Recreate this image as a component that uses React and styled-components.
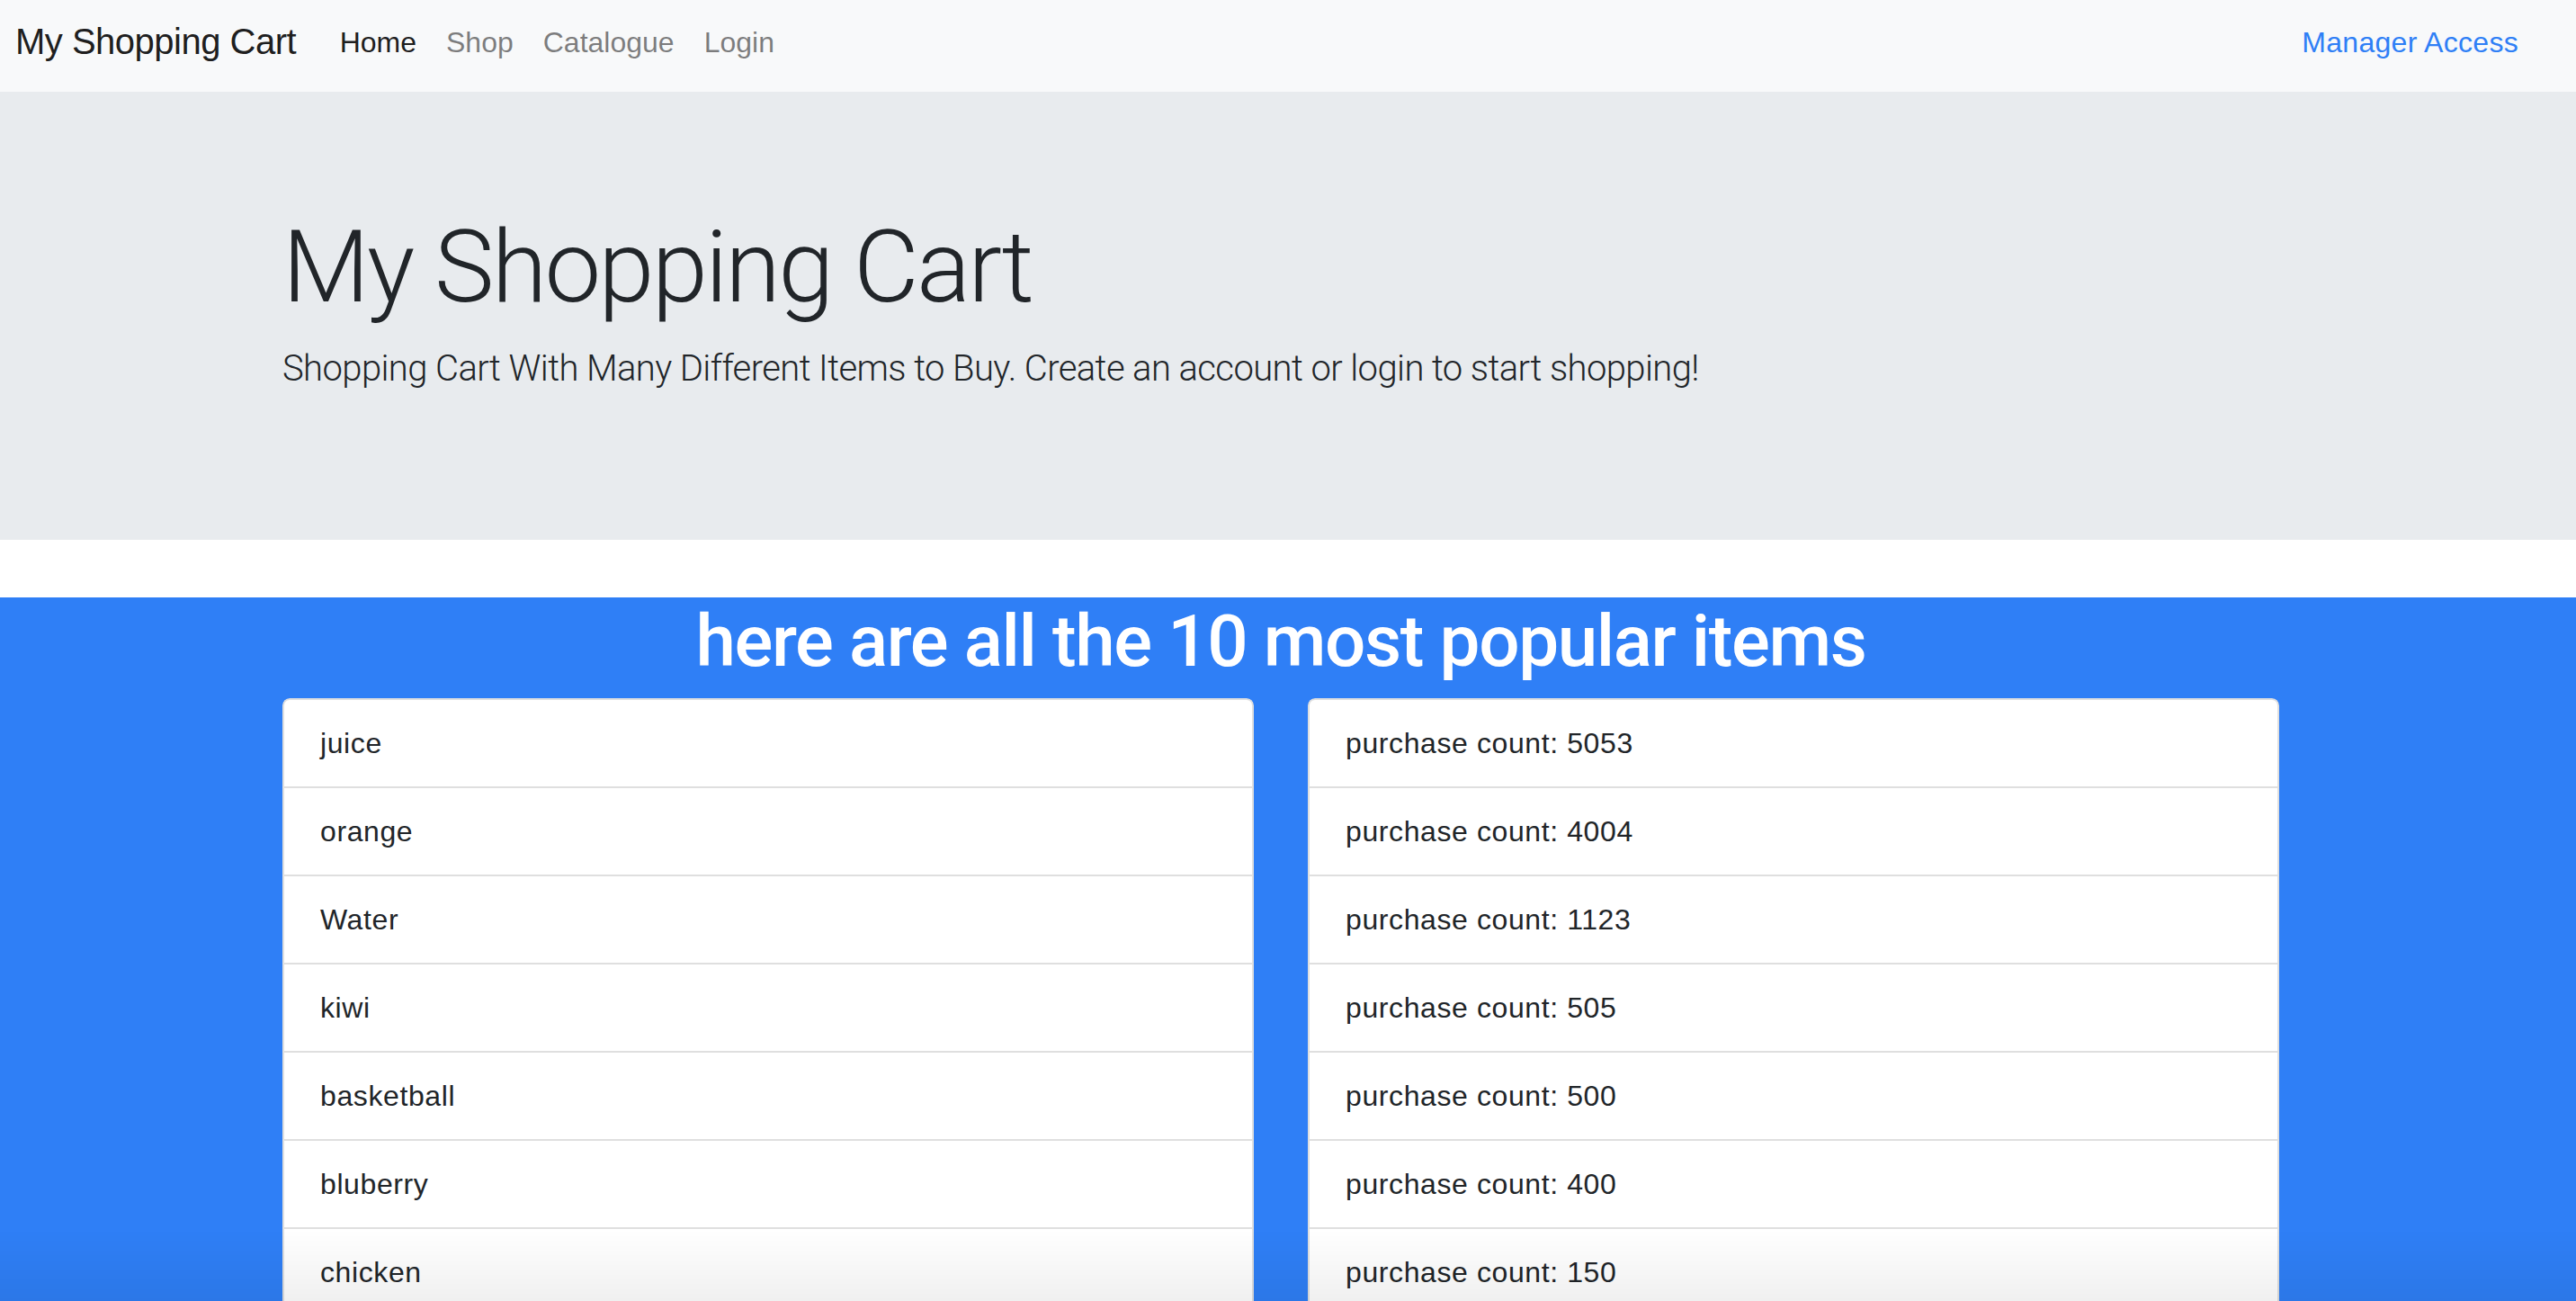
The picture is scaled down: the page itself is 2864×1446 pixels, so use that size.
import React from 'react';
import styled, { createGlobalStyle } from 'styled-components';

const popularItems = [
  { name: 'juice', count: 5053 },
  { name: 'orange', count: 4004 },
  { name: 'Water', count: 1123 },
  { name: 'kiwi', count: 505 },
  { name: 'basketball', count: 500 },
  { name: 'bluberry', count: 400 },
  { name: 'chicken', count: 150 },
  { name: 'apple', count: 120 },
  { name: 'milk', count: 95 },
  { name: 'bread', count: 60 },
];

const navLinks = [
  { id: 1, label: 'Home', active: true },
  { id: 2, label: 'Shop' },
  { id: 3, label: 'Catalogue' },
  { id: 4, label: 'Login' },
];

const App = () => {
  return (
    <>
      <GlobalStyle />
      <Navbar>
        <Brand>My Shopping Cart</Brand>
        <NavList>
          {navLinks.map(link => (
            <NavLink key={link.id} $active={link.active}>
              {link.label}
            </NavLink>
          ))}
        </NavList>
        <ManagerLink>Manager Access</ManagerLink>
      </Navbar>

      <Jumbotron>
        <Container>
          <Display>My Shopping Cart</Display>
          <Lead>
            Shopping Cart With Many Different Items to Buy. Create an account or
            login to start shopping!
          </Lead>
        </Container>
      </Jumbotron>

      <PopularSection>
        <Container>
          <SectionTitle>here are all the 10 most popular items</SectionTitle>
          <Columns>
            <ListGroup>
              {popularItems.map(item => (
                <ListItem key={item.name}>{item.name}</ListItem>
              ))}
            </ListGroup>
            <ListGroup>
              {popularItems.map(item => (
                <ListItem key={item.name}>purchase count: {item.count}</ListItem>
              ))}
            </ListGroup>
          </Columns>
        </Container>
      </PopularSection>

      <BottomFade />
    </>
  );
};

const GlobalStyle = createGlobalStyle`
  html, body {
    margin: 0;
    padding: 0;
    background: #fff;
  }
  body {
    font-family: "Liberation Sans", Arial, sans-serif;
    color: #212529;
    overflow: hidden;
  }
  * {
    box-sizing: border-box;
  }
`;

const Navbar = styled.nav`
  display: flex;
  align-items: flex-start;
  height: 102px;
  padding: 16px 48px 0 17px;
  background-color: #f8f9fa;
`;

const Brand = styled.div`
  font-size: 40px;
  line-height: 60px;
  letter-spacing: -0.5px;
  color: rgba(0, 0, 0, 0.9);
  margin-right: 32px;
  white-space: nowrap;
`;

const NavList = styled.ul`
  display: flex;
  list-style: none;
  margin: 0;
  padding: 7px 0 0;
`;

const NavLink = styled.li`
  padding: 0 16.5px;
  font-size: 32px;
  line-height: 48px;
  color: ${props => (props.$active ? 'rgba(0, 0, 0, 0.9)' : 'rgba(0, 0, 0, 0.5)')};
  cursor: pointer;
`;

const ManagerLink = styled.a`
  margin-left: auto;
  padding: 7px 16px 0;
  font-size: 32px;
  line-height: 48px;
  letter-spacing: 0.3px;
  color: #2f7ff6;
  cursor: pointer;
`;

const Jumbotron = styled.section`
  background-color: #e8ebee;
  padding: 128px 16px 128px 0;
  margin-bottom: 64px;
`;

const Container = styled.div`
  width: 2220px;
  margin: 0 auto;
`;

const Display = styled.h1`
  margin: 0 0 16px;
  font-family: Roboto, "Liberation Sans", sans-serif;
  font-size: 112px;
  font-weight: 300;
  line-height: 1.2;
  letter-spacing: -2.8px;
  color: #212529;
`;

const Lead = styled.p`
  margin: 0 0 32px;
  font-family: Roboto, "Liberation Sans", sans-serif;
  font-size: 40px;
  font-weight: 300;
  line-height: 60px;
  letter-spacing: -0.6px;
  color: #212529;
`;

const PopularSection = styled.section`
  background-color: #2f7ff6;
  padding: 0 16px 80px 0;
  min-height: 900px;
`;

const SectionTitle = styled.h1`
  margin: 0 0 16px;
  padding-top: 2px;
  text-align: center;
  font-family: Roboto, "Liberation Sans", sans-serif;
  font-size: 80px;
  font-weight: 500;
  line-height: 94px;
  letter-spacing: -1.4px;
  color: #fff;
`;

const Columns = styled.div`
  display: grid;
  grid-template-columns: 1fr 1fr;
  column-gap: 60px;
`;

const ListGroup = styled.ul`
  display: flex;
  flex-direction: column;
  list-style: none;
  margin: 0;
  padding: 0;
  border-radius: 8px;
  overflow: hidden;
`;

const ListItem = styled.li`
  padding: 24px 40px;
  margin-bottom: -2px;
  font-size: 32px;
  line-height: 48px;
  letter-spacing: 0.6px;
  color: #212529;
  background-color: #fff;
  border: 2px solid rgba(0, 0, 0, 0.125);
  &:first-child {
    border-top-left-radius: 8px;
    border-top-right-radius: 8px;
  }
`;

const BottomFade = styled.div`
  position: fixed;
  left: 0;
  right: 0;
  bottom: 0;
  height: 80px;
  pointer-events: none;
  background: linear-gradient(to bottom, rgba(0, 0, 0, 0), rgba(0, 0, 0, 0.06));
`;

export default App;
